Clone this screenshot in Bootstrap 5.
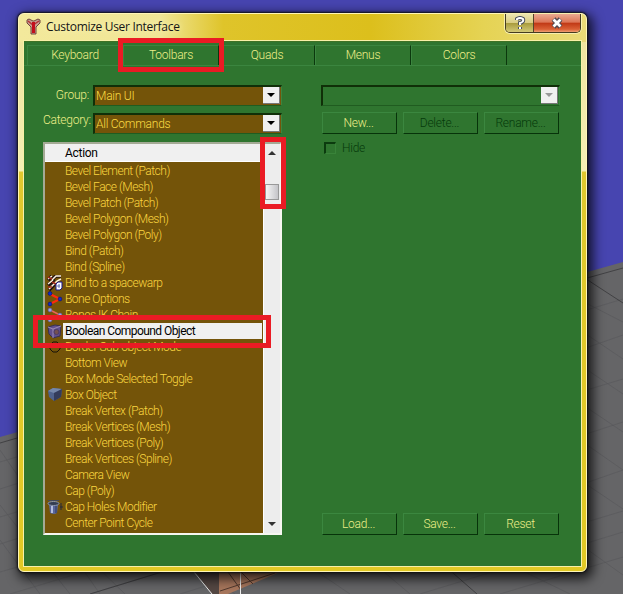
<!DOCTYPE html>
<html lang="en">
<head>
<meta charset="utf-8">
<title>Customize User Interface</title>
<link href="https://cdn.jsdelivr.net/npm/bootstrap@5.3.0/dist/css/bootstrap.min.css" rel="stylesheet">
<style>
body{width:623px;height:594px;overflow:hidden;background:#4745b0;font:12px/16px Roboto,"Liberation Sans",sans-serif;font-weight:300;color:#eeee88;letter-spacing:-.25px}
.scene{left:0;top:0;z-index:-1}
.window-frame{width:569px;height:559px;margin:13px 0 0 18px;border:1px solid #fff6b8;border-radius:6px;background:linear-gradient(90deg,#f3e99c 0,#f0e695 25%,#dfc42a 36%,#dcbf1c 62%,#e5d354 82%,#eadb78 100%) 0 0/100% 28px no-repeat,linear-gradient(#eee39a 0,#f5efb5 157px,#e0c82e 158px,#e2c925 100%);box-shadow:0 0 2px 1px #111,3px 4px 12px 3px rgba(0,0,0,.75)}
.title-row{height:27px;padding-left:7px}
.title-label{font:12px/16px "Open Sans","Noto Sans",sans-serif;color:#151515;margin:5px 0 0 5px;letter-spacing:-.3px;text-shadow:0 0 6px #fff9c0}
.sys-buttons{width:76px;height:19px;border:1px solid #443c20;border-top:0;border-radius:0 0 5px 5px;overflow:hidden;margin-right:5px;box-shadow:0 0 0 1px #f7efb0}
.sys-help{width:28px;background:linear-gradient(#ece5b0 0,#d9cd84 48%,#a79a3b 50%,#d2c977 100%);border-right:1px solid #55442a}
.sys-close{background:linear-gradient(#eaaa90 0,#dc7557 46%,#c03815 50%,#da6136 85%,#efa074 100%)}
.client{width:557px;height:525px;margin-left:5px;background:#2f752f;outline:1px solid #f8f0a8;border-top:1px solid #3e7224}
.tab-row{height:24px;padding:3px 0 0 3px;border-bottom:1px solid #3b853f}
.tab-cell{width:96px;height:20px;border-top:1px solid #3b853f;border-right:1px solid #0b380d;text-align:center;line-height:19px;border-left:1px solid #3b853f}
.pane{padding:19px 0 0 19px}
.left-side{width:239px}
.right-side{width:239px;margin-left:39px}
.field-label{width:46px;text-align:right;white-space:nowrap;line-height:20px}
.field-label-raised{line-height:14px}
.combo{height:21px;border:2px solid #102f08;border-right:1px solid #3b853f;border-bottom:1px solid #205c20;background:#745409;color:#fbdc44;padding:0 1px 0 1px;line-height:19px}
.combo-green{background:#2f752f}
.combo-btn{width:17px;height:17px;background:#f0f0f0;border-right:1px solid #777;border-bottom:1px solid #777;flex:none}
.push{width:75px;height:22px;border:1px solid #3b873f;border-right:1px solid #07330a;border-bottom:1px solid #07330a;text-align:center;line-height:20px;padding-right:2px}
.faded{color:#063a0b}
.tick{width:12px;height:12px;border:2px solid #0b3b0e;border-right:1px solid #398339;border-bottom:1px solid #398339}
.action-list{width:239px;height:393px;margin-top:8px;border:2px solid #a4aa95;border-right-color:#f7f7f1;border-bottom-color:#f7f7f1;background:#745409;color:#fbd640;letter-spacing:-.49px}
.list-head{height:18px;background:#f0f0f0;border-bottom:1px solid #fff;color:#000;padding-left:20px;line-height:18px;margin-bottom:1px;font-weight:400;letter-spacing:-.3px}
.item{height:16px;white-space:nowrap;padding-left:2px}
.item svg{width:16px;height:16px;flex:none}
.item span{padding-left:2px;flex:1;line-height:16px}
.item-space{width:16px;flex:none}
.item .picked{background:#f0f0f0;color:#000;margin-right:1px;font-weight:400;letter-spacing:-.55px}
.scroll{width:17px;background:#ededed;border-left:1px solid #fff}
.thumb{width:14px;height:16px;border:1px solid #999;background:linear-gradient(90deg,#f6f6f6,#c4c4c8);margin-top:29px}
.callout{position:absolute;border:5px solid #ea1b24}
.call-tab{left:118px;top:38px;width:106px;height:34px}
.call-scroll{left:260px;top:137px;width:26px;height:72px}
.call-item{left:33px;top:315px;width:238px;height:33px}
</style>
<script src="https://cdn.jsdelivr.net/npm/bootstrap@5.3.0/dist/js/bootstrap.bundle.min.js"></script>
</head>
<body class="position-relative">
<svg class="scene position-absolute" width="623" height="594" viewBox="0 0 623 594">
<path fill="#656567" d="M0 437L623 262V594H0z"/>
<g fill="none" stroke="#58585a" stroke-width=".6"><path d="M0 462L40 450M0 489L60 470M0 517L90 490M0 544L140 500M0 572L200 515M10 594L290 510M90 594L330 520M180 594L420 520M0 450L100 594M0 505L70 594M0 540L40 594M90 560L125 594M200 570L235 594M300 560L350 594M370 560L410 594M500 560L570 594M560 530L623 575M420 594L623 532M500 594L623 557M580 480L623 509M580 440L623 470M580 403L623 432M580 365L623 394M580 330L623 359M580 300L623 322M580 312L623 299M580 350L623 335M580 392L623 379M580 436L623 422M580 485L623 470M580 524L623 511"/></g>
<path d="M0 443L24 436M580 275L623 303M580 280L623 268M90 594L165 571M445 566L477 594" stroke="#39393b" stroke-width=".8" fill="none"/>
<path d="M195 572H219V594H212z" fill="#544743"/><path d="M219 570H285L228 594H219z" fill="#a7765c"/><path d="M228 572L241 590M241 572L253 584M220 591L275 573" stroke="#51392e" fill="none"/><path d="M194 572L212 594M240.500 572V594" stroke="#eee" fill="none"/>
</svg>
<main class="window-frame">
<div class="title-row d-flex align-items-start">
<svg width="15" height="18" viewBox="0 0 15 18" style="margin-top:4px"><path d="M1 2l2-1 4 2h1l4-2 2 1v3l-4 4v7H5V9L1 5z" fill="#c9a092" stroke="#70463c"/><path d="M2 3l5 4 6-4" stroke="#b53338" stroke-width="1.500" fill="none"/><path d="M7.500 4v11" stroke="#c30f1c" stroke-width="3"/></svg>
<span class="title-label me-auto">Customize User Interface</span>
<div class="sys-buttons d-flex">
<div class="sys-help d-flex justify-content-center align-items-center"><svg width="12" height="14" viewBox="0 0 12 14"><path d="M3 4V3q3-2 6 0 1 3-3 4v2M6 11v2" fill="none" stroke="#4a5060" stroke-width="4"/><path d="M3 4V3q3-2 6 0 1 3-3 4v2M6 11v2" fill="none" stroke="#fff" stroke-width="2"/></svg></div>
<div class="sys-close flex-fill d-flex justify-content-center align-items-center"><svg width="14" height="12" viewBox="0 0 14 12"><path d="M3.500 2l7 8M10.500 2l-7 8" stroke="#514850" stroke-width="5"/><path d="M3.500 2.500l7 7M10.500 2.500l-7 7" stroke="#fff" stroke-width="2.800"/></svg></div>
</div>
</div>
<div class="client">
<div class="tab-row d-flex"><div class="tab-cell">Keyboard</div><div class="tab-cell">Toolbars</div><div class="tab-cell">Quads</div><div class="tab-cell">Menus</div><div class="tab-cell">Colors</div></div>
<div class="pane d-flex">
<section class="left-side">
<div class="d-flex"><div class="field-label me-1">Group:</div><div class="combo flex-fill d-flex"><span class="me-auto">Main UI</span><span class="combo-btn d-flex justify-content-center align-items-center"><svg width="8" height="4"><path d="M0 0h8L4 4z"/></svg></span></div></div>
<div class="d-flex" style="margin-top:7px"><div class="field-label field-label-raised me-1">Category:</div><div class="combo flex-fill d-flex"><span class="me-auto">All Commands</span><span class="combo-btn d-flex justify-content-center align-items-center"><svg width="8" height="4"><path d="M0 0h8L4 4z"/></svg></span></div></div>
<div class="action-list d-flex">
<div class="flex-fill">
<div class="list-head">Action</div>
<div class="item d-flex"><i class="item-space"></i><span>Bevel Element (Patch)</span></div>
<div class="item d-flex"><i class="item-space"></i><span>Bevel Face (Mesh)</span></div>
<div class="item d-flex"><i class="item-space"></i><span>Bevel Patch (Patch)</span></div>
<div class="item d-flex"><i class="item-space"></i><span>Bevel Polygon (Mesh)</span></div>
<div class="item d-flex"><i class="item-space"></i><span>Bevel Polygon (Poly)</span></div>
<div class="item d-flex"><i class="item-space"></i><span>Bind (Patch)</span></div>
<div class="item d-flex"><i class="item-space"></i><span>Bind (Spline)</span></div>
<div class="item d-flex"><svg viewBox="0 0 16 16"><path d="M1 5l4-4M5 4l4-3h5M1 10l4-3 2-3M2 15l4-4 2-3" fill="none" stroke="#201010" stroke-width="3.500"/><path d="M1 4l4-3M5 5l4-4h5M1 9l5-4M2 14l4-4 4-4 4-2" fill="none" stroke="#fff4df" stroke-width="1.500"/><path d="M1 2l4 2M5 7l4 2M1 12h4" stroke="#a12a1a" stroke-width="1.500" fill="none"/><path d="M9 9l2-2h4v6l-2 2H9z" fill="#fff" stroke="#15158b"/><path d="M10 11h3M12 9v4" stroke="#6670b5"/></svg><span>Bind to a spacewarp</span></div>
<div class="item d-flex"><svg viewBox="0 0 16 16"><path d="M3 3l10 5L3 13" stroke="#ff2a0c" stroke-width="2" fill="none"/><g fill="#102cd0" stroke="#080e68" stroke-width=".6"><circle cx="3" cy="2.500" r="1.900"/><circle cx="13" cy="8" r="1.900"/><circle cx="3" cy="13" r="1.900"/></g></svg><span>Bone Options</span></div>
<div class="item d-flex"><svg viewBox="0 0 16 16"><path d="M3 3l10 5L3 13" stroke="#e86558" stroke-width="1.600" fill="none"/><g fill="#9da1eb" stroke="#514f83" stroke-width=".6"><circle cx="3" cy="3" r="2"/><circle cx="13" cy="8" r="2"/><circle cx="3" cy="13" r="2"/></g></svg><span>Bones IK Chain</span></div>
<div class="item d-flex"><svg viewBox="0 0 16 16"><path d="M1 4l7-2 6 1-1 10-7 2-4-4z" fill="#60508f" stroke="#383052"/><path d="M1 4l5 2 8-3M6 6v9" fill="none" stroke="#9d8bb3"/><circle cx="9.500" cy="9" r="2.500" fill="#745052" stroke="#4d3b65"/></svg><span class="picked">Boolean Compound Object</span></div>
<div class="item d-flex"><svg viewBox="0 0 16 16"><path d="M6 3h4l3 3v4l-3 3H6l-3-3V6z" fill="none" stroke="#17120b"/></svg><span>Border Sub-object Mode</span></div>
<div class="item d-flex"><i class="item-space"></i><span>Bottom View</span></div>
<div class="item d-flex"><i class="item-space"></i><span>Box Mode Selected Toggle</span></div>
<div class="item d-flex"><svg viewBox="0 0 16 16"><path d="M1 4l5-3 9 1-1 8-7 4-5-4z" fill="#50628c"/><path d="M1 4l5-3 9 1-8 4z" fill="#7587aa"/><path d="M7 6l8-4-1 8-7 4z" fill="#343c5c"/></svg><span>Box Object</span></div>
<div class="item d-flex"><i class="item-space"></i><span>Break Vertex (Patch)</span></div>
<div class="item d-flex"><i class="item-space"></i><span>Break Vertices (Mesh)</span></div>
<div class="item d-flex"><i class="item-space"></i><span>Break Vertices (Poly)</span></div>
<div class="item d-flex"><i class="item-space"></i><span>Break Vertices (Spline)</span></div>
<div class="item d-flex"><i class="item-space"></i><span>Camera View</span></div>
<div class="item d-flex"><i class="item-space"></i><span>Cap (Poly)</span></div>
<div class="item d-flex"><svg viewBox="0 0 16 16"><path d="M2 6h9l-1 8q-3 2-7 0z" fill="#5a6799"/><path d="M5 7v7" stroke="#b4bede" stroke-width="2"/><path d="M9 7v7" stroke="#3b4775" stroke-width="1.500"/><ellipse cx="6.500" cy="4.500" rx="5.500" ry="2" fill="#343d50" stroke="#8d98ae"/><path d="M1 1.500h11" stroke="#454a58"/><path d="M14 4v7M13 8h3" stroke="#26283b"/></svg><span>Cap Holes Modifier</span></div>
<div class="item d-flex"><i class="item-space"></i><span>Center Point Cycle</span></div>
</div>
<div class="scroll d-flex flex-column align-items-center"><svg width="8" height="4" class="flex-shrink-0" style="margin-top:7px"><path d="M0 4h8L4 0z" fill="#333"/></svg><div class="thumb flex-shrink-0"></div><svg width="8" height="4" class="mt-auto flex-shrink-0" style="margin-bottom:7px"><path d="M0 0h8L4 4z" fill="#333"/></svg></div>
</div>
</section>
<section class="right-side d-flex flex-column">
<div class="combo combo-green d-flex justify-content-end"><span class="combo-btn d-flex justify-content-center align-items-center"><svg width="8" height="4"><path d="M0 0h8L4 4z" fill="#999"/></svg></span></div>
<div class="d-flex" style="gap:6px;margin:6px 0 0 1px"><div class="push">New...</div><div class="push faded">Delete...</div><div class="push faded">Rename...</div></div>
<div class="d-flex faded align-items-center" style="margin:6px 0 0 3px"><span class="tick"></span><span style="margin-left:6px">Hide</span></div>
<div class="d-flex mt-auto" style="gap:6px;margin-left:1px"><div class="push">Load...</div><div class="push">Save...</div><div class="push">Reset</div></div>
</section>
</div>
</div>
</main>
<div class="callout call-tab"></div><div class="callout call-scroll"></div><div class="callout call-item"></div>
</body>
</html>
